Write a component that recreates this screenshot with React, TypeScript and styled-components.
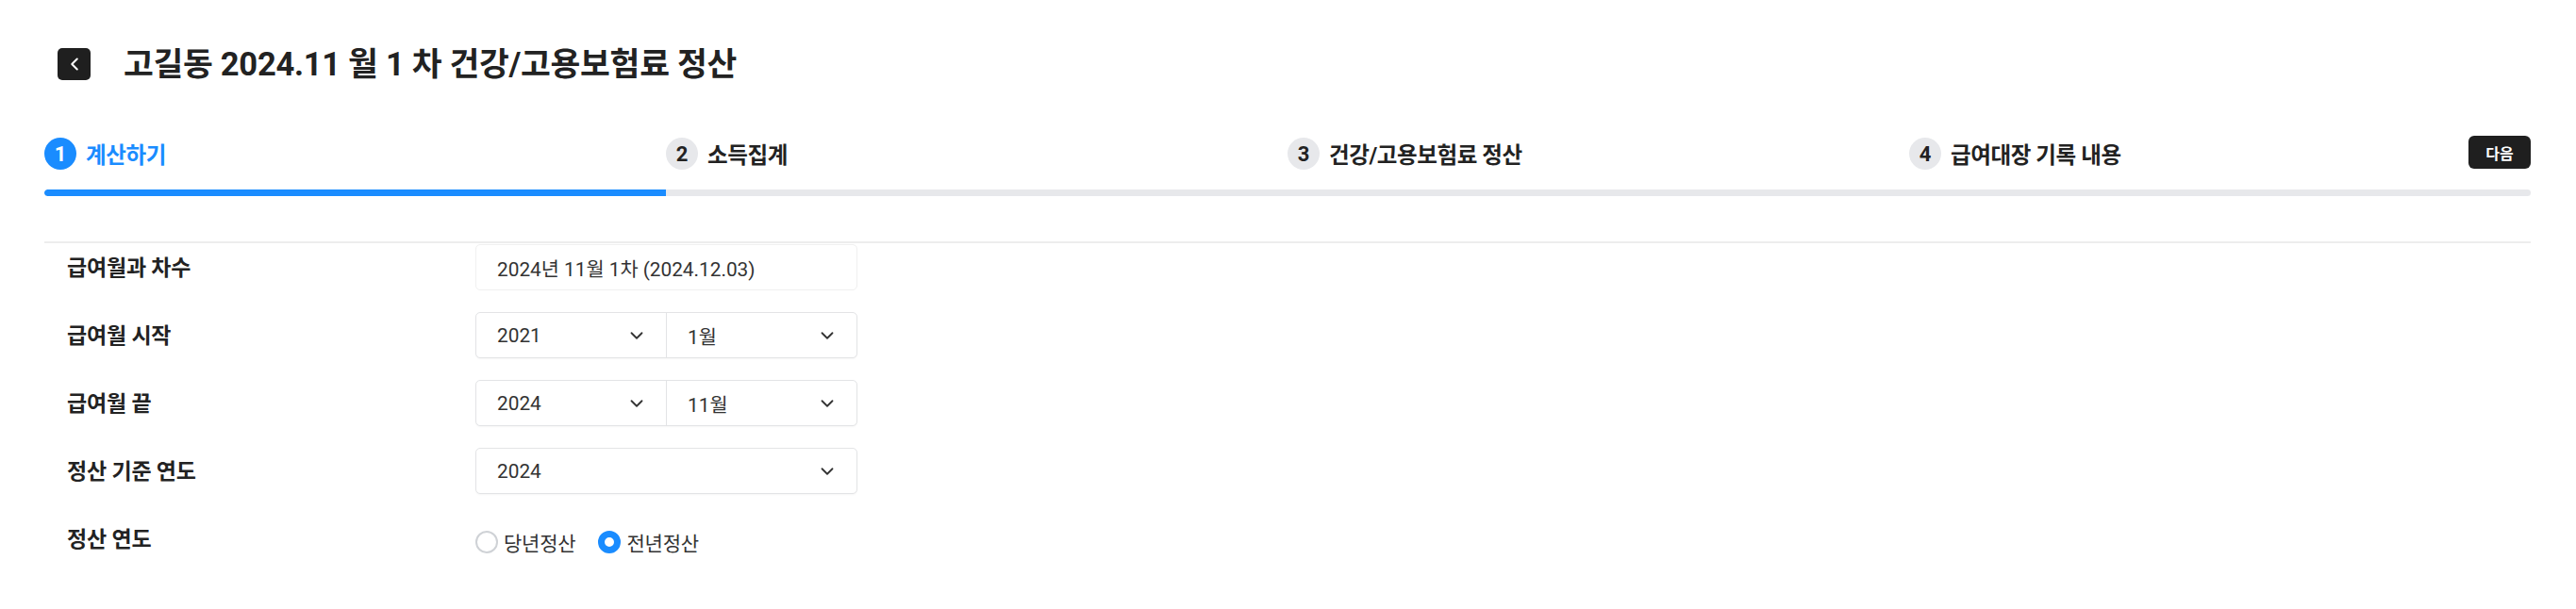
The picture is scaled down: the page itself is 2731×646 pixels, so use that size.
import React from "react";
import styled, { createGlobalStyle } from "styled-components";
import { ChevronDown, ChevronLeft } from "lucide-react";

const Global = createGlobalStyle`
  html, body { margin: 0; padding: 0; background: #fff; }
  body { font-family: Roboto, "Noto Sans CJK KR", sans-serif; color: #222; }
  * { box-sizing: border-box; }
`;

const Page = styled.div`
  padding: 51px 48px 0 47px;
  width: 2731px;
`;

const Header = styled.div`
  display: flex;
  align-items: center;
  gap: 35px;
  padding-left: 14px;
  height: 34px;
`;

const BackButton = styled.button`
  width: 35px;
  height: 34px;
  border: none;
  border-radius: 5px;
  background: #1f1f1f;
  color: #fff;
  display: flex;
  align-items: center;
  justify-content: center;
  padding: 0;
`;

const Title = styled.h1`
  margin: 0;
  font-size: 34.6px;
  font-weight: 700;
  color: #222;
  letter-spacing: -0.3px;
  line-height: 1;
`;

const StepsArea = styled.div`
  margin-top: 61px;
  position: relative;
`;

const Steps = styled.div`
  display: grid;
  grid-template-columns: repeat(4, 1fr);
  height: 34px;
`;

const Step = styled.div`
  display: flex;
  align-items: center;
  gap: 10px;
`;

const StepNum = styled.span<{ $active?: boolean }>`
  width: 34px;
  height: 34px;
  border-radius: 50%;
  display: flex;
  align-items: center;
  justify-content: center;
  font-size: 22px;
  font-weight: 700;
  background: ${(p) => (p.$active ? "#1a8cff" : "#e7e8eb")};
  color: ${(p) => (p.$active ? "#fff" : "#222")};
`;

const StepLabel = styled.span<{ $active?: boolean }>`
  font-size: 23.5px;
  font-weight: 700;
  letter-spacing: -0.4px;
  color: ${(p) => (p.$active ? "#1a8cff" : "#222")};
`;

const NextButton = styled.button`
  position: absolute;
  right: 0;
  top: -2px;
  width: 66px;
  height: 35px;
  border: none;
  border-radius: 6px;
  background: #1f1f1f;
  color: #fff;
  font-family: Roboto, "Noto Sans CJK KR", sans-serif;
  font-size: 16px;
  font-weight: 700;
`;

const Track = styled.div`
  margin-top: 21px;
  height: 7px;
  border-radius: 4px;
  background: #e7e8eb;
  overflow: hidden;
`;

const Fill = styled.div`
  height: 100%;
  background: #1a8cff;
  border-radius: 4px 0 0 4px;
`;

const Divider = styled.div`
  margin-top: 48px;
  height: 2px;
  background: #ededed;
`;

const Form = styled.div`
  display: grid;
  grid-template-columns: 433px 405px;
  row-gap: 23px;
  padding: 1px 0 0 24px;
`;

const Label = styled.div`
  display: flex;
  align-items: center;
  height: 49px;
  font-size: 23px;
  font-weight: 700;
  color: #222;
  letter-spacing: -0.2px;
  padding-bottom: 3px;
`;

const Field = styled.div<{ $readonly?: boolean }>`
  height: 49px;
  border: 1px solid ${(p) => (p.$readonly ? "#f0f0f0" : "#e3e4e6")};
  border-radius: 5px;
  display: flex;
  background: #fff;
  box-shadow: ${(p) => (p.$readonly ? "none" : "0 1px 2px rgba(0,0,0,0.04)")};
`;

const FieldText = styled.div`
  display: flex;
  align-items: center;
  padding-left: 22px;
  font-size: 20.8px;
  color: #333;
`;

const SelectPart = styled.div<{ $divider?: boolean }>`
  flex: 1;
  display: flex;
  align-items: center;
  justify-content: space-between;
  padding: 0 20px 0 22px;
  font-size: 20.8px;
  color: #333;
  border-left: ${(p) => (p.$divider ? "1px solid #e3e4e6" : "none")};
`;

const RadioGroup = styled.div`
  display: flex;
  align-items: center;
  height: 49px;
  gap: 24px;
  padding-top: 6px;
`;

const RadioItem = styled.label`
  display: flex;
  align-items: center;
  gap: 6px;
  font-size: 21px;
  color: #333;
  letter-spacing: -0.2px;
`;

const RadioDot = styled.span<{ $checked?: boolean }>`
  width: 24px;
  height: 24px;
  border-radius: 50%;
  border: ${(p) => (p.$checked ? "7px solid #1a8cff" : "2px solid #cfd2d6")};
  background: #fff;
`;

const steps = ["계산하기", "소득집계", "건강/고용보험료 정산", "급여대장 기록 내용"];

function Select({ values }: { values: string[] }) {
  return (
    <Field>
      {values.map((v, i) => (
        <SelectPart key={i} $divider={i > 0}>
          <span>{v}</span>
          <ChevronDown size={22} strokeWidth={2} color="#333" />
        </SelectPart>
      ))}
    </Field>
  );
}

export default function App() {
  return (
    <>
      <Global />
      <Page>
        <Header>
          <BackButton>
            <ChevronLeft size={22} strokeWidth={2.2} />
          </BackButton>
          <Title>고길동 2024.11 월 1 차 건강/고용보험료 정산</Title>
        </Header>
        <StepsArea>
          <Steps>
            {steps.map((s, i) => (
              <Step key={s}>
                <StepNum $active={i === 0}>{i + 1}</StepNum>
                <StepLabel $active={i === 0}>{s}</StepLabel>
              </Step>
            ))}
          </Steps>
          <NextButton>다음</NextButton>
          <Track>
            <Fill style={{ width: "25%" }} />
          </Track>
        </StepsArea>
        <Divider />
        <Form>
          <Label>급여월과 차수</Label>
          <Field $readonly>
            <FieldText>2024년 11월 1차 (2024.12.03)</FieldText>
          </Field>
          <Label>급여월 시작</Label>
          <Select values={["2021", "1월"]} />
          <Label>급여월 끝</Label>
          <Select values={["2024", "11월"]} />
          <Label>정산 기준 연도</Label>
          <Select values={["2024"]} />
          <Label>정산 연도</Label>
          <RadioGroup>
            <RadioItem>
              <RadioDot />
              당년정산
            </RadioItem>
            <RadioItem>
              <RadioDot $checked />
              전년정산
            </RadioItem>
          </RadioGroup>
        </Form>
      </Page>
    </>
  );
}
